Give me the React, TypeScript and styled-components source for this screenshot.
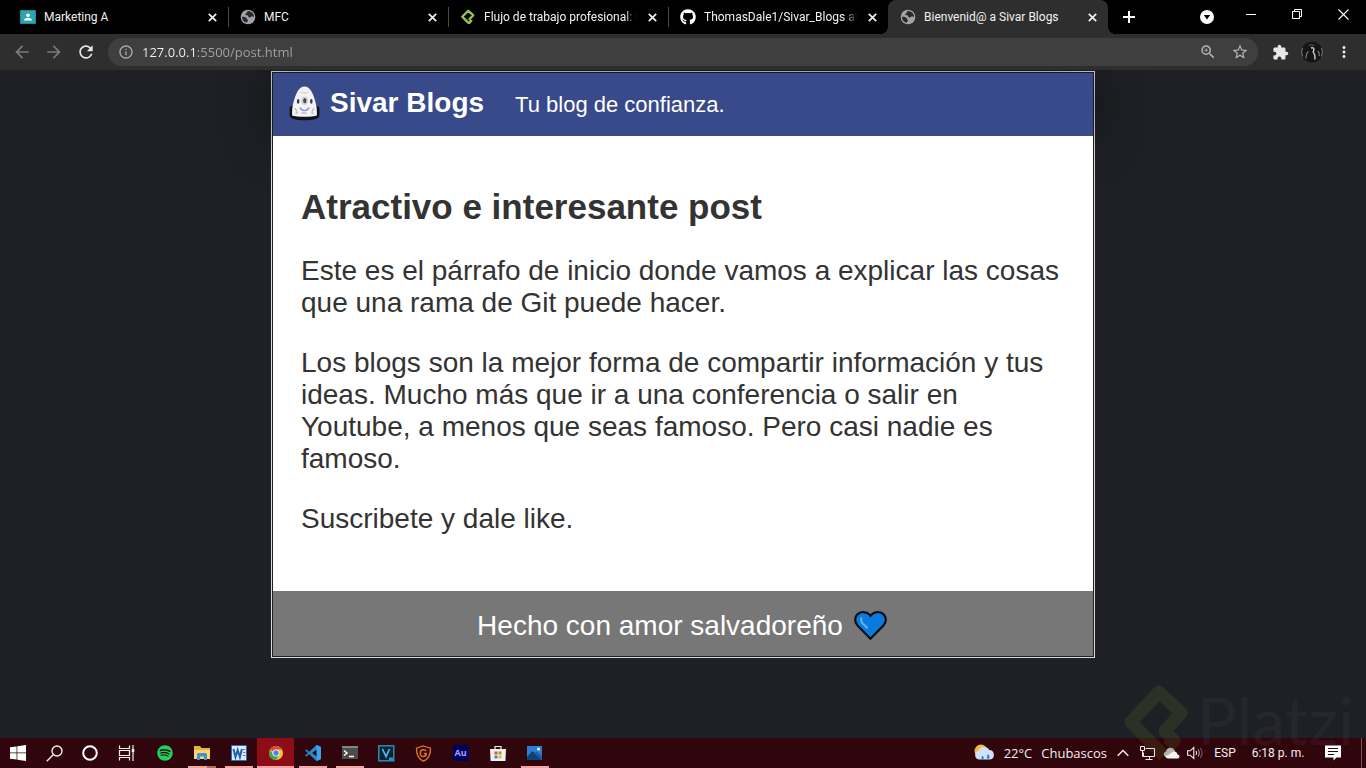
import React from 'react';
import styled, { createGlobalStyle, css } from 'styled-components';
import {
  MdArrowBack,
  MdArrowForward,
  MdRefresh,
  MdInfoOutline,
  MdZoomIn,
  MdStarBorder,
  MdExtension,
  MdMoreVert,
} from 'react-icons/md';
import { FaGithub, FaSpotify } from 'react-icons/fa';

const UI_FONT = '"Open Sans", "Noto Sans", sans-serif';
const COMPACT_FONT = 'Roboto, "Open Sans", sans-serif';

const GlobalStyle = createGlobalStyle`
  *, *::before, *::after { box-sizing: border-box; }
  body {
    margin: 0;
    background: #1f2025;
    font-family: ${UI_FONT};
  }
  button {
    margin: 0;
    padding: 0;
    border: 0;
    background: none;
    color: inherit;
    font: inherit;
  }
  svg { display: block; flex: none; }
`;

const Desktop = styled.div`
  position: relative;
  display: flex;
  flex-direction: column;
  min-height: 100vh;
  overflow: hidden;
`;

/* ---------- Browser: tab strip ---------- */

const TabStrip = styled.header`
  display: flex;
  height: 34px;
  padding-left: 8px;
  background: #000;
  color: #fff;
`;

const TabList = styled.nav`
  display: flex;
  flex: 0 1 1100px;
  min-width: 0;
`;

const Tab = styled.div<{ $active?: boolean; $divider?: boolean }>`
  position: relative;
  display: flex;
  flex: 0 1 220px;
  align-items: center;
  gap: 8px;
  min-width: 0;
  padding: 0 9px 0 12px;
  ${(p) =>
    p.$divider &&
    css`
      &::after {
        content: '';
        position: absolute;
        right: -1px;
        top: 7px;
        height: 20px;
        border-right: 1px solid #4b4b4b;
      }
    `}
  ${(p) =>
    p.$active &&
    css`
      background: #2e2e2e;
      border-radius: 8px 8px 0 0;
      &::before,
      &::after {
        content: '';
        position: absolute;
        bottom: 0;
        width: 8px;
        height: 8px;
      }
      &::before {
        right: 100%;
        background: radial-gradient(circle at 0 0, transparent 8px, #2e2e2e 8px);
      }
      &::after {
        left: 100%;
        background: radial-gradient(circle at 100% 0, transparent 8px, #2e2e2e 8px);
      }
    `}
`;

const TabTitle = styled.a<{ $fade?: boolean }>`
  flex: 1;
  min-width: 0;
  white-space: nowrap;
  color: #f1f1f1;
  font-family: ${COMPACT_FONT};
  font-size: 12px;
  line-height: 16px;
  text-decoration: none;
  ${(p) =>
    p.$fade &&
    css`
      mask-image: linear-gradient(to right, #000 calc(100% - 12px), transparent);
    `}
`;

const TabButton = styled.button`
  display: grid;
  place-items: center;
  flex: none;
  width: 14px;
  height: 14px;
`;

const NewTab = styled.button`
  display: grid;
  place-items: center;
  width: 42px;
`;

const WindowControls = styled.div`
  display: flex;
  height: 28px;
  margin-left: auto;
`;

const WindowButton = styled.button`
  display: grid;
  place-items: center;
  width: 46px;
`;

const SearchTabs = styled(WindowButton)`
  width: 42px;
  height: 34px;
`;

/* ---------- Browser: toolbar ---------- */

const Toolbar = styled.div`
  position: relative;
  z-index: 2;
  display: flex;
  align-items: center;
  height: 36px;
  padding: 0 6px;
  background: #2e2e2e;
  color: #e8e8e8;
`;

const ToolButton = styled.button<{ $dim?: boolean }>`
  display: grid;
  place-items: center;
  flex: none;
  width: 32px;
  height: 28px;
  color: ${(p) => (p.$dim ? '#7b7b7b' : '#e8e8e8')};
`;

const AddressBar = styled.label`
  display: flex;
  flex: 1;
  align-items: center;
  gap: 8px;
  min-width: 0;
  height: 28px;
  margin: 0 6px;
  padding: 0 2px 0 10px;
  border-radius: 14px;
  background: #3f3f3f;
  color: #a9a9a9;
`;

const AddressInput = styled.input`
  flex: 1;
  min-width: 0;
  padding: 0;
  border: 0;
  outline: 0;
  background: linear-gradient(to right, #f4f4f4 55px, #a3a3a3 55px);
  background-clip: text;
  color: #a3a3a3;
  -webkit-text-fill-color: transparent;
  font-family: ${UI_FONT};
  font-size: 13px;
  line-height: 20px;
`;

const OmniActions = styled.div`
  display: flex;
`;

const OmniButton = styled(ToolButton)`
  color: #b4b4b4;
`;

/* ---------- Web page ---------- */

const Viewport = styled.main`
  flex: 1;
  padding: 1px 16px 0;
  background: #1f2025;
`;

const Article = styled.article`
  max-width: 824px;
  margin: 0 auto;
  border: 1px solid #d9dae4;
  padding: 1px;
  background: #1f2025;
  color: #333;
  font-family: Arial, 'Liberation Sans', sans-serif;
  font-size: 28px;
  line-height: 32px;
`;

const BlogHeader = styled.header`
  display: flex;
  align-items: flex-start;
  height: 63px;
  padding: 13px 14px 0;
  background: #384a8a;
  box-shadow: 0 0 48px rgba(0, 0, 0, 0.5);
  color: #fff;
`;

const BlogName = styled.h1`
  display: flex;
  gap: 8px;
  margin: 0 31px 0 0;
  font-size: 28px;
  line-height: 34px;
`;

const Tagline = styled.p`
  margin: 0;
  font-size: 22px;
  line-height: 37px;
`;

const Post = styled.section`
  position: relative;
  padding: 28px;
  background: #fff;
`;

const PostTitle = styled.h2`
  margin: 23px 0 28px;
  font-size: 35px;
  line-height: 40px;
`;

const Paragraph = styled.p`
  margin: 0 0 28px;
`;

const BlogFooter = styled.footer`
  position: relative;
  display: flex;
  align-items: center;
  justify-content: center;
  gap: 8px;
  height: 65px;
  padding-top: 4px;
  background: #777;
  color: #fff;
`;

/* ---------- Taskbar ---------- */

const Taskbar = styled.footer`
  display: flex;
  height: 30px;
  background: #30060c;
  color: #f4eeee;
`;

const TaskGroup = styled.div<{ $gap?: number }>`
  display: flex;
  margin-right: ${(p) => p.$gap || 0}px;
`;

const SystemButton = styled.button`
  display: grid;
  place-items: center;
  width: 36px;
`;

const AppButton = styled.button<{ $open?: boolean; $active?: boolean; $stacked?: boolean }>`
  display: grid;
  place-items: center;
  width: 37px;
  background: ${(p) => (p.$active ? '#8c0d18' : 'none')};
  ${(p) =>
    (p.$open || p.$active) &&
    css`
      position: relative;
      &::after {
        content: '';
        position: absolute;
        bottom: 0;
        left: ${p.$active ? 0 : 5}px;
        right: ${p.$active ? 0 : 4}px;
        height: 2px;
        background: ${p.$stacked
          ? 'linear-gradient(to right, #f6a3a3 19px, #b06a6c 19px)'
          : '#f6a3a3'};
      }
    `}
`;

const Tray = styled.div`
  display: flex;
  align-items: center;
  margin-left: auto;
`;

const WeatherButton = styled.button`
  display: flex;
  align-items: center;
  gap: 9px;
  margin-right: 4px;
  font-size: 13px;
  line-height: 20px;
`;

const TrayButton = styled.button<{ $width: number }>`
  display: grid;
  place-items: center;
  width: ${(p) => p.$width}px;
  height: 30px;
  font-family: ${COMPACT_FONT};
  font-size: 12px;
  line-height: 16px;
  white-space: nowrap;
`;

const ShowDesktop = styled.button`
  width: 5px;
  height: 30px;
  margin-left: 8px;
  border-left: 1px solid #75565a;
`;

/* The watermark lies over both the page and the taskbar. */
const Watermark = styled.div`
  position: absolute;
  z-index: 3;
  right: 12px;
  bottom: 0;
  display: flex;
  align-items: flex-start;
  gap: 8px;
  height: 84px;
  color: rgba(128, 128, 148, 0.08);
  font-family: Lato, sans-serif;
  font-size: 66px;
  line-height: 72px;
  pointer-events: none;
`;

/* ---------- Drawings ---------- */

const ClassroomIcon = () => (
  <svg width="16" height="16" viewBox="0 0 16 16">
    <rect x="0" y="1" width="16" height="14" rx="1" fill="#1f8b97" />
    <rect x="1" y="2" width="14" height="12" fill="#2aa5b3" />
    <circle cx="8" cy="6.200" r="1.800" fill="#fff" />
    <path d="M4 11.600c0-2 2-2.900 4-2.900s4 .9 4 2.900z" fill="#fff" />
  </svg>
);

const GlobeIcon = () => (
  <svg width="16" height="16" viewBox="0 0 16 16">
    <circle cx="8" cy="8" r="7.300" fill="#a0a4a8" />
    <path
      d="M8.600 1.900C7.200 2 6.600 2.800 6.800 3.600c.2.700-1 1-1.500 1.500-.4.600.3 1.200 1.200 1.100 1.100-.1 1.700.5 1.800 1.200.1 1 1 1.200 1.900 1 .9-.2 1-1.200 1.900-1.100.9.100 1.300.8 2.100.6-.2-3-2.600-5.700-5.600-6zM2 7.800c1.600 0 3.500.2 4.500 1.100.7.700.2 1.400.9 1.700 1 .3.700 1.200.1 1.800-.5.500-.9.800-.8 1.400C3.800 13.200 2 10.900 2 7.800z"
      fill="#292a2c"
    />
  </svg>
);

const PlatziIcon = () => (
  <svg width="16" height="16" viewBox="0 0 16 16">
    <path
      d="M9 14.300L2.200 7.700 8.200 1.800 13.200 6.200 9.600 10.100 11.300 11.800 9 14.300"
      fill="none"
      stroke="#9bc44a"
      strokeWidth="2.300"
      strokeLinejoin="round"
    />
  </svg>
);

const CloseTabIcon = () => (
  <svg width="9" height="9" viewBox="0 0 9 9" stroke="#f1f1f1" strokeWidth="1.700">
    <path d="M.8.8l7.400 7.400M8.200.8L.8 8.200" />
  </svg>
);

const PlusIcon = () => (
  <svg width="12" height="12" viewBox="0 0 12 12" stroke="#fff" strokeWidth="2">
    <path d="M6 0v12M0 6h12" />
  </svg>
);

const SearchTabsIcon = () => (
  <svg width="16" height="16" viewBox="0 0 16 16">
    <circle cx="8" cy="8" r="7" fill="#fff" />
    <path d="M4.800 6h6.400L8 10.500z" fill="#000" />
  </svg>
);

const MinimizeIcon = () => (
  <svg width="10" height="10" viewBox="0 0 10 10" stroke="#fff">
    <path d="M0 5.500h10" />
  </svg>
);

const RestoreIcon = () => (
  <svg width="10" height="10" viewBox="0 0 10 10" fill="none" stroke="#fff">
    <path d="M.5 2.500h7v7h-7zM2.500 2.500v-2h7v7h-2" />
  </svg>
);

const CloseWindowIcon = () => (
  <svg width="11" height="11" viewBox="0 0 11 11" stroke="#fff" strokeWidth="1.100">
    <path d="M.5.5l10 10M10.500.5l-10 10" />
  </svg>
);

const ProfileIcon = () => (
  <svg width="22" height="22" viewBox="0 0 22 22">
    <circle cx="11" cy="11" r="10.500" fill="#151515" />
    <path d="M1.500 7Q-.2 11 1.500 15.500M20.500 7q1.700 4 0 8.500" stroke="#777" fill="none" />
    <path d="M8 5q2-2.500 5 0" stroke="#3b3b3b" strokeWidth="2" fill="none" />
    <path d="M10 7q2.500-1 3 1.500l-.8 2.500 1.500 3 .3 4.500" stroke="#c4c4c4" strokeWidth="1.500" fill="none" />
    <path d="M7.500 10.500q-2.500 2-2.500 7M17 10q1.500 2 1.200 5" stroke="#777" strokeWidth="1.300" fill="none" />
  </svg>
);

const GhostLogo = () => (
  <svg width="35" height="35" viewBox="1 1 32 33">
    <path
      d="M3 21.500q0-1.500 1.500-1.500h25q1.500 0 1.500 1.500v7q0 4.800-14 4.800T3 28.500z"
      fill="#111218"
    />
    <path
      d="M17 1.500c-5 0-7.400 5.500-9.400 11.500C6.300 17 5.300 21 5.300 25.500v3.200c4.200 1.600 19.200 1.600 23.400 0v-3.200c0-4.500-1-8.500-2.300-12.500C24.400 7 22 1.500 17 1.500z"
      fill="#f2f2f6"
    />
    <path d="M13.500 7q3.500 1 7 0" stroke="#cfcfcb" fill="none" />
    <ellipse cx="17" cy="14.800" rx="3.300" ry="4" fill="#d5d5d7" />
    <ellipse cx="17.300" cy="14.800" rx="1.600" ry="2.500" fill="#4b4b50" />
    <ellipse cx="11" cy="15.500" rx="1.200" ry="2.200" fill="#3a3a42" />
    <ellipse cx="23.400" cy="15.500" rx="1.200" ry="2.200" fill="#3a3a42" />
    <path d="M12.500 21.500q4.500 5.500 9 0" stroke="#7b96d8" strokeWidth="1.300" fill="none" />
    <path d="M14 26.500h5M8 22l2 3M26 22l-2 3M8.500 27l2-1M25.500 27l-2-1" stroke="#a8a8ac" />
  </svg>
);

const HeartIcon = () => (
  <svg width="38" height="32" viewBox="-2 0 39 32">
    <path
      d="M18 29L4.700 15.400C1.400 12 1.500 6.500 4.800 3.800c3.600-3 8.800-2.800 12 .5L18 5.500l1.200-1.200c3.200-3.300 8.400-3.500 12-.5 3.300 2.700 3.400 8.200.1 11.600z"
      fill="#0a7bdc"
      stroke="#080c16"
      strokeWidth="2.200"
    />
    <path d="M8.500 8q-.8 3.500 2 6l4 3.700" stroke="#5fb0ee" strokeWidth="2.200" fill="none" strokeLinecap="round" />
  </svg>
);

const WindowsIcon = () => (
  <svg width="16" height="16" viewBox="0 0 16 16" fill="#fff">
    <path d="M0 2.300l6.600-.9v6.200H0zM7.300 1.300L16 0v7.600H7.300zM0 8.300h6.600v6.300L0 13.700zM7.300 8.300H16V16l-8.700-1.300z" />
  </svg>
);

const TaskSearchIcon = () => (
  <svg width="17" height="17" viewBox="0 0 17 17" fill="none" stroke="#f4eeee" strokeWidth="1.400">
    <circle cx="11" cy="6" r="5" />
    <path d="M7.400 9.600L.8 16.200" />
  </svg>
);

const CortanaIcon = () => (
  <svg width="16" height="16" viewBox="0 0 16 16" fill="none" stroke="#fff" strokeWidth="2">
    <circle cx="8" cy="8" r="6.800" />
  </svg>
);

const TaskViewIcon = () => (
  <svg width="17" height="16" viewBox="0 0 17 16" fill="none" stroke="#f4eeee" strokeWidth="1.200">
    <path d="M1.500.5v3h10v-3M1.500 15.500v-3h10v3M1.500 5.500h10v5h-10zM15 0v16" />
    <path d="M15 4v3" strokeWidth="2.600" />
  </svg>
);

const FolderIcon = () => (
  <svg width="18" height="16" viewBox="0 0 18 16">
    <path d="M1 1h6l1.500 2H17v11H1z" fill="#e8b33c" />
    <path d="M1 5h16v9H1z" fill="#fbd66e" />
    <path d="M4 15V9.500Q4 8 5.500 8h7Q14 8 14 9.500V15h-3v-3.500H7V15z" fill="#3f8fd2" />
  </svg>
);

const WordIcon = () => (
  <svg width="16" height="16" viewBox="0 0 16 16">
    <rect width="16" height="16" rx="1" fill="#2f6bb8" />
    <rect x="1" y="1" width="14" height="14" fill="#dfeaf8" />
    <path d="M12 4.500h2.500M12 7.500h2.500M12 10.500h2.500" stroke="#5582bf" />
    <path d="M2.500 4l2 8 2.200-7 2.200 7 2-8" fill="none" stroke="#1f5fb2" strokeWidth="2" />
  </svg>
);

const ChromeIcon = () => (
  <svg width="16" height="16" viewBox="0 0 16 16">
    <circle cx="8" cy="8" r="7" fill="#f4c430" />
    <path d="M8 8L1.900 4.500A7 7 0 0114.100 4.500H8z" fill="#e0483c" />
    <path d="M1.900 4.500A7 7 0 008 15l3-5.300H5z" fill="#3aa757" />
    <circle cx="8" cy="8" r="3.500" fill="#fff" />
    <circle cx="8" cy="8" r="2.700" fill="#4486f0" />
  </svg>
);

const CodeIcon = () => (
  <svg width="16" height="16" viewBox="0 0 16 16">
    <path
      d="M11.500 0L16 2v12l-4.500 2-7.300-6.700L1.500 11.500 0 10.700l2.900-2.700L0 5.300l1.500-.8 2.700 2.200zM11.800 4.500L7.200 8l4.600 3.500z"
      fill="#2489ca"
      fillRule="evenodd"
    />
    <path d="M11.500 0L16 2v12l-4.200 2z" fill="#37a6ec" />
  </svg>
);

const TerminalIcon = () => (
  <svg width="16" height="14" viewBox="0 0 16 14">
    <rect width="16" height="13" fill="#4d4d4d" />
    <rect width="16" height="2" fill="#858585" />
    <path d="M2 4.500l3 2.500-3 2.500M7 10.500h5" fill="none" stroke="#fff" strokeWidth="1.500" />
  </svg>
);

const VegasIcon = () => (
  <svg width="17" height="17" viewBox="0 0 17 17">
    <rect x=".8" y=".8" width="15" height="15" fill="#0b2430" stroke="#2b93bd" strokeWidth="1.400" />
    <path d="M4.500 4L8 11.500 11.500 4" fill="none" stroke="#4dc0ea" strokeWidth="1.700" />
    <path d="M11 12.500h4v3h-4z" fill="#2b93bd" />
  </svg>
);

const ShieldIcon = () => (
  <svg width="17" height="17" viewBox="0 0 17 17" fill="none" stroke="#e3742b">
    <path d="M8.500 1l7 2.200c.2 6-1.500 10.300-7 13-5.500-2.700-7.200-7-7-13z" strokeWidth="1.300" />
    <path
      d="M11.200 6q-1-1.300-2.700-1.300c-2 0-3.200 1.600-3.200 3.500s1.200 3.300 3.200 3.300c1.700 0 2.700-1 2.700-2.900H8.800"
      strokeWidth="1.500"
    />
  </svg>
);

const AuditionBadge = styled.span`
  width: 16px;
  border-radius: 2px;
  background: #00005b;
  color: #a9a2ff;
  font-size: 9px;
  font-weight: 700;
  line-height: 16px;
  text-align: center;
`;

const StoreIcon = () => (
  <svg width="16" height="17" viewBox="0 0 16 17">
    <path d="M5 4V1.500h6V4" fill="none" stroke="#f4f0ee" strokeWidth="1.200" />
    <path d="M0 4h16l-.6 12H.6z" fill="#f4f0ee" />
    <path d="M4.500 6.500h3v3h-3z" fill="#e0562f" />
    <path d="M8.500 6.500h3v3h-3z" fill="#7aaf3b" />
    <path d="M4.500 10.500h3v3h-3z" fill="#2a8fd4" />
    <path d="M8.500 10.500h3v3h-3z" fill="#eeb42f" />
  </svg>
);

const PhotosIcon = () => (
  <svg width="16" height="16" viewBox="0 0 16 16">
    <rect y="1" width="15" height="14" fill="#2b7fcf" />
    <path d="M0 12l5.500-6 9.500 9H0z" fill="#113f78" />
    <path d="M7 8.500l2.500-2 5.500 4.500v4z" fill="#195ca8" />
    <circle cx="11.500" cy="4" r="1.500" fill="#e6f3ff" />
  </svg>
);

const WeatherIcon = () => (
  <svg width="22" height="18" viewBox="0 0 22 18">
    <circle cx="8" cy="7" r="6.500" fill="#f5b93c" />
    <path d="M6 15.500a4.500 4.500 0 01-.5-8.800A6 6 0 0116.300 6a4.800 4.800 0 01.7 9.500z" fill="#cfe3f8" />
    <path
      d="M9.500 11.500q2.500 3 .2 4.300-2.400-.8-.2-4.300zM15 10q3 3.500.3 5.200-2.800-1-.3-5.200z"
      fill="#2f82d6"
    />
  </svg>
);

const ChevronUpIcon = () => (
  <svg width="12" height="8" viewBox="0 0 12 8" fill="none" stroke="#f4eeee" strokeWidth="1.400">
    <path d="M.7 6.800L6 1.500l5.300 5.300" />
  </svg>
);

const NetworkIcon = () => (
  <svg width="17" height="14" viewBox="0 0 17 14" fill="none" stroke="#f4eeee">
    <path d="M6.500 2.500h9v8h-11v-4M10.500 10.500v3M6.500 13.500h7M1.500.5h4v4h-4zM3.500 4.500v6h1" />
  </svg>
);

const CloudIcon = () => (
  <svg width="17" height="12" viewBox="0 0 17 12">
    <path d="M3 10A2.800 2.800 0 013 4.500 4.600 4.600 0 0111.500 3L14 10z" fill="#b9b2af" />
    <path
      d="M5 11.500q-2.500-.3-2.800-2.500Q5.500 8.500 8 6q2.500-2.500 5-1 1.300 1 1.300 2.200 2.200.3 2.200 2.300t-2 2z"
      fill="#f7f3f0"
    />
  </svg>
);

const SpeakerIcon = () => (
  <svg width="17" height="14" viewBox="0 0 17 14" fill="none" stroke="#f4eeee" strokeWidth="1.100">
    <path d="M.6 4.800h2.600L6.800 1.500v11L3.200 9.200H.6zM9 5q1.300 2 0 4" />
    <path d="M11 3.500q2.500 3.500 0 7" stroke="#b49fa1" />
    <path d="M13.200 2q3.800 5 0 10" stroke="#7a5a5e" />
  </svg>
);

const NotificationIcon = () => (
  <svg width="16" height="16" viewBox="0 0 16 16">
    <path d="M0 .5h16v12h-4.500L8.500 15.500v-3H0z" fill="#fff" />
    <path d="M3 3.500h10M3 6.500h10M3 9.500h6" stroke="#30060c" />
  </svg>
);

const WatermarkIcon = () => (
  <svg width="66" height="84" viewBox="0 0 66 84">
    <path
      d="M41 72L8 38 36 8 58 29 42 47l9 10-6 6"
      fill="none"
      stroke="rgba(138, 170, 40, 0.12)"
      strokeWidth="13"
      strokeLinejoin="round"
    />
  </svg>
);

/* ---------- Data ---------- */

const tabs = [
  { title: 'Marketing A', icon: <ClassroomIcon /> },
  { title: 'MFC', icon: <GlobeIcon /> },
  { title: 'Flujo de trabajo profesional: H', icon: <PlatziIcon />, fade: true },
  { title: 'ThomasDale1/Sivar_Blogs at f', icon: <FaGithub size={16} />, fade: true },
  { title: 'Bienvenid@ a Sivar Blogs', icon: <GlobeIcon /> },
];

const systemButtons = [
  { name: 'Inicio', icon: <WindowsIcon /> },
  { name: 'Buscar', icon: <TaskSearchIcon /> },
  { name: 'Cortana', icon: <CortanaIcon /> },
  { name: 'Vista de tareas', icon: <TaskViewIcon /> },
];

const apps = [
  { name: 'Spotify', icon: <FaSpotify size={16} color="#1ed05f" /> },
  { name: 'Explorador', icon: <FolderIcon />, open: true, stacked: true },
  { name: 'Word', icon: <WordIcon />, open: true },
  { name: 'Chrome', icon: <ChromeIcon />, active: true },
  { name: 'Code', icon: <CodeIcon />, open: true },
  { name: 'Terminal', icon: <TerminalIcon />, open: true },
  { name: 'Vegas', icon: <VegasIcon /> },
  { name: 'G Hub', icon: <ShieldIcon /> },
  { name: 'Audition', icon: <AuditionBadge>Au</AuditionBadge> },
  { name: 'Store', icon: <StoreIcon /> },
  { name: 'Fotos', icon: <PhotosIcon />, open: true },
];

export default function App() {
  return (
    <Desktop>
      <GlobalStyle />
      <TabStrip>
        <TabList>
          {tabs.map((tab, i) => (
            <Tab key={tab.title} $active={i === 4} $divider={i < 3}>
              {tab.icon}
              <TabTitle href="#" $fade={tab.fade}>
                {tab.title}
              </TabTitle>
              <TabButton aria-label="Cerrar">
                <CloseTabIcon />
              </TabButton>
            </Tab>
          ))}
        </TabList>
        <NewTab aria-label="Nueva pestaña">
          <PlusIcon />
        </NewTab>
        <WindowControls>
          <SearchTabs aria-label="Buscar pestañas">
            <SearchTabsIcon />
          </SearchTabs>
          <WindowButton aria-label="Minimizar">
            <MinimizeIcon />
          </WindowButton>
          <WindowButton aria-label="Restaurar">
            <RestoreIcon />
          </WindowButton>
          <WindowButton aria-label="Cerrar ventana">
            <CloseWindowIcon />
          </WindowButton>
        </WindowControls>
      </TabStrip>

      <Toolbar>
        <ToolButton $dim aria-label="Atrás">
          <MdArrowBack size={20} />
        </ToolButton>
        <ToolButton $dim aria-label="Adelante">
          <MdArrowForward size={20} />
        </ToolButton>
        <ToolButton aria-label="Recargar">
          <MdRefresh size={20} />
        </ToolButton>
        <AddressBar>
          <MdInfoOutline size={16} />
          <AddressInput type="text" aria-label="Dirección" defaultValue="127.0.0.1:5500/post.html" />
          <OmniActions>
            <OmniButton aria-label="Zoom">
              <MdZoomIn size={18} />
            </OmniButton>
            <OmniButton aria-label="Favoritos">
              <MdStarBorder size={18} />
            </OmniButton>
          </OmniActions>
        </AddressBar>
        <ToolButton aria-label="Extensiones">
          <MdExtension size={17} />
        </ToolButton>
        <ToolButton aria-label="Perfil">
          <ProfileIcon />
        </ToolButton>
        <ToolButton aria-label="Menú">
          <MdMoreVert size={18} />
        </ToolButton>
      </Toolbar>

      <Viewport>
        <Article>
          <BlogHeader>
            <BlogName>
              <GhostLogo />
              Sivar Blogs
            </BlogName>
            <Tagline>Tu blog de confianza.</Tagline>
          </BlogHeader>
          <Post>
            <PostTitle>Atractivo e interesante post</PostTitle>
            <Paragraph>
              Este es el párrafo de inicio donde vamos a explicar las cosas que una rama de Git
              puede hacer.
            </Paragraph>
            <Paragraph>
              Los blogs son la mejor forma de compartir información y tus ideas. Mucho más que ir a
              una conferencia o salir en Youtube, a menos que seas famoso. Pero casi nadie es
              famoso.
            </Paragraph>
            <Paragraph>Suscribete y dale like.</Paragraph>
          </Post>
          <BlogFooter>
            Hecho con amor salvadoreño
            <HeartIcon />
          </BlogFooter>
        </Article>
      </Viewport>

      <Taskbar>
        <TaskGroup $gap={2}>
          {systemButtons.map((b) => (
            <SystemButton key={b.name} aria-label={b.name}>
              {b.icon}
            </SystemButton>
          ))}
        </TaskGroup>
        <TaskGroup>
          {apps.map((a) => (
            <AppButton
              key={a.name}
              aria-label={a.name}
              $open={a.open}
              $active={a.active}
              $stacked={a.stacked}
            >
              {a.icon}
            </AppButton>
          ))}
        </TaskGroup>
        <Tray>
          <WeatherButton>
            <WeatherIcon />
            <span>22°C</span>
            <span>Chubascos</span>
          </WeatherButton>
          <TrayButton $width={24} aria-label="Iconos ocultos">
            <ChevronUpIcon />
          </TrayButton>
          <TrayButton $width={24} aria-label="Red">
            <NetworkIcon />
          </TrayButton>
          <TrayButton $width={24} aria-label="OneDrive">
            <CloudIcon />
          </TrayButton>
          <TrayButton $width={24} aria-label="Volumen">
            <SpeakerIcon />
          </TrayButton>
          <TrayButton $width={36}>ESP</TrayButton>
          <TrayButton $width={70}>6:18 p. m.</TrayButton>
          <TrayButton $width={40} aria-label="Notificaciones">
            <NotificationIcon />
          </TrayButton>
          <ShowDesktop aria-label="Mostrar escritorio" />
        </Tray>
      </Taskbar>

      <Watermark aria-hidden="true">
        <WatermarkIcon />
        Platzi
      </Watermark>
    </Desktop>
  );
}
